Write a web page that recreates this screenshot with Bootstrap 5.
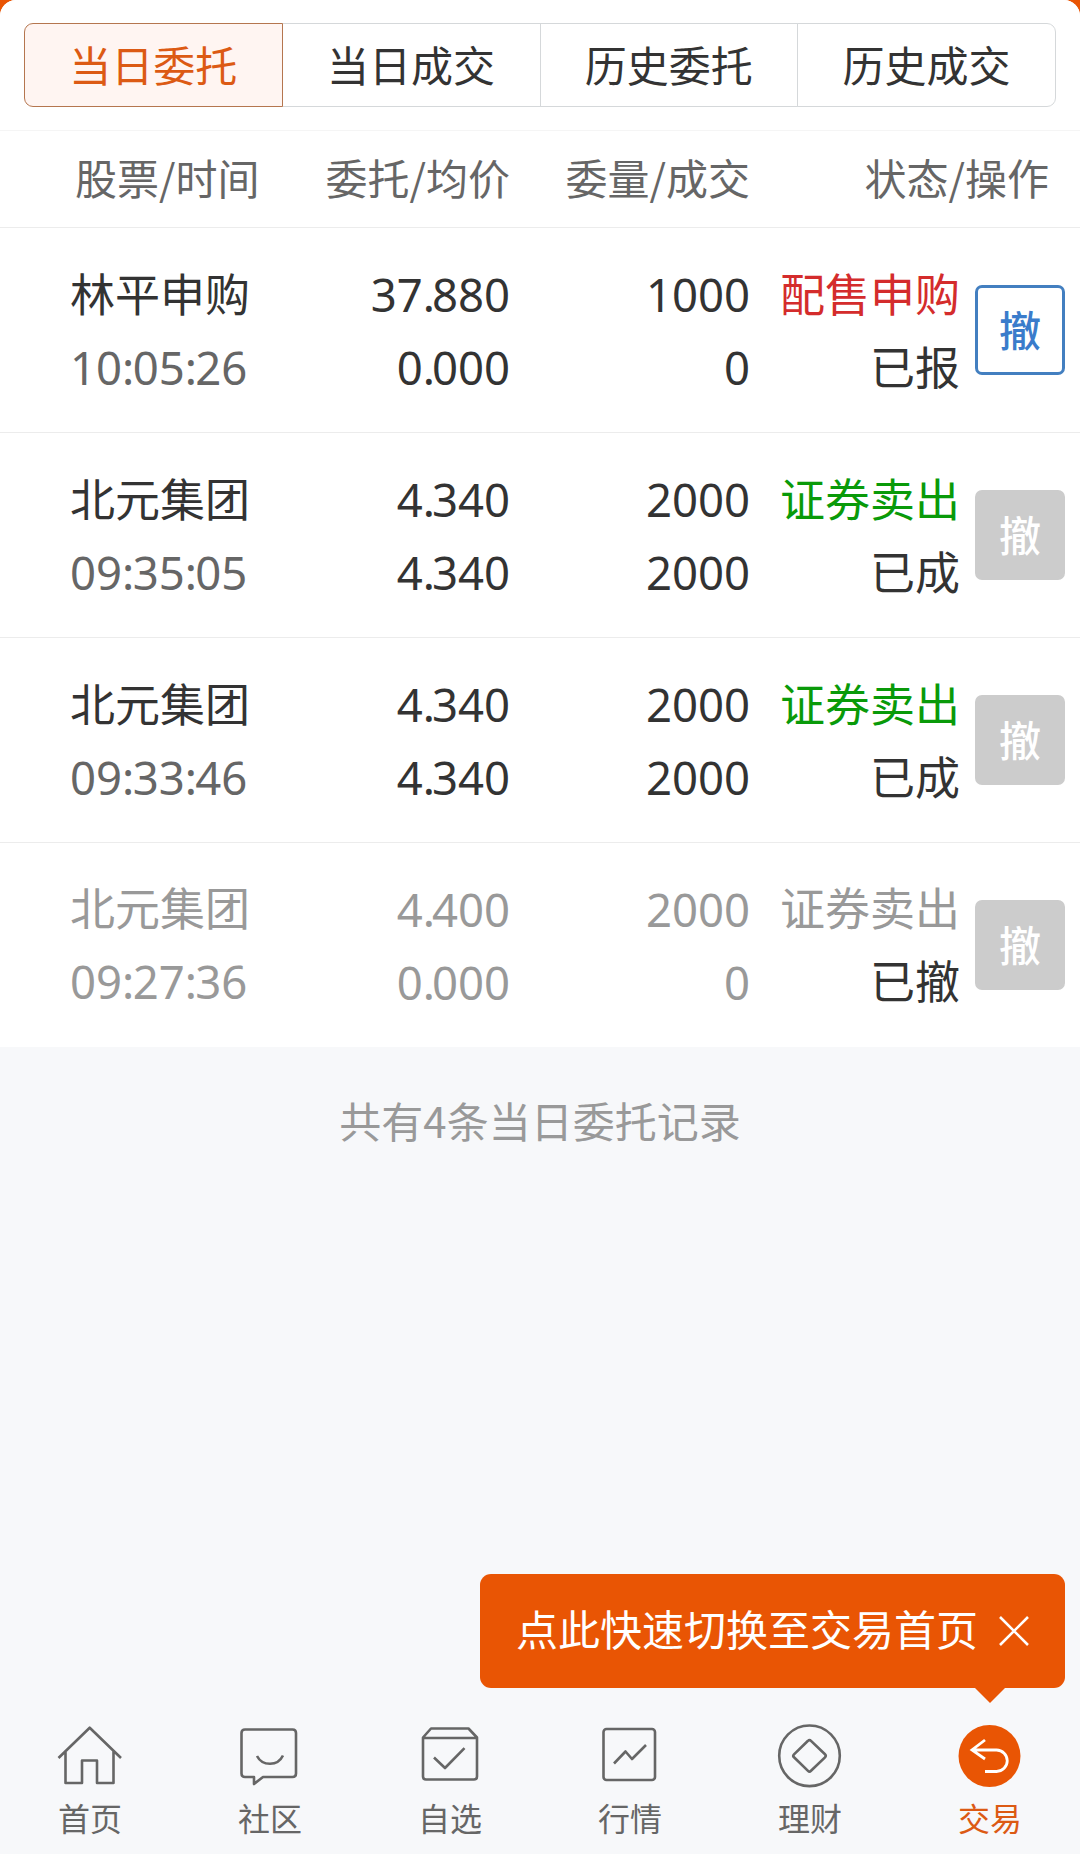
<!DOCTYPE html>
<html lang="zh-CN">
<head>
<meta charset="utf-8">
<meta name="viewport" content="width=device-width, initial-scale=1">
<title>当日委托</title>
<link href="https://cdn.jsdelivr.net/npm/bootstrap@5.3.0/dist/css/bootstrap.min.css" rel="stylesheet">
<style>
  body { background: #e95504; font-family: "Noto Sans CJK SC", sans-serif; color: #333; }
  .screen { height: 1854px; background: #f7f8fa; border-radius: 16px 16px 0 0; overflow: hidden; }
  .top-tabs { height: 131px; padding: 23px 24px 0; border-bottom: 1px solid #f5f5f5; }
  .top-tabs .btn-group { height: 84px; }
  .top-tabs .btn { flex: 1 1 0; padding: 0 0 3px; font-size: 42px; line-height: 79px; color: #333; border: 1px solid #d5d8da; border-radius: 9px; background: #fff; }
  .top-tabs .btn.active { color: #dc5a14; background: #fff5f2; border-color: #b5764f; }
  .c1 { width: 270px; padding-left: 70px; }
  .c2, .c3 { width: 240px; text-align: right; }
  .c4 { width: 210px; text-align: right; }
  .heads { height: 97px; font-size: 42px; line-height: 91px; color: #666; border-bottom: 1px solid #ececec; }
  .heads .c1 { padding-left: 75px; }
  .heads .c4 { width: 299px; }
  .order { height: 205px; font-size: 45px; line-height: 73px; border-bottom: 1px solid #ececec; }
  .order .c1, .order .c4 { margin-bottom: 3px; }
  .order:last-child { height: 204px; padding-bottom: 1px; border-bottom: 0; }
  .num { font-family: "Noto Sans", "Noto Sans CJK SC", sans-serif; font-size: 45.5px; }
  .order .c2, .order .c3 { margin-top: 2px; }
  .pt { letter-spacing: -3px; }
  .cl { letter-spacing: -1.6px; }
  .dim { color: #999; }
  .time { color: #666; line-height: 77px; margin-bottom: -4px; }
  .dim .time { color: #999; }
  .buy { color: #d42c2c; }
  .sell { color: #099a09; }
  .cancel { width: 90px; height: 90px; margin-left: 15px; padding: 0 0 2px; font-size: 42px; font-weight: 500; line-height: 78px; border: 3px solid #437fc0; border-radius: 7px; color: #3a7ccb; background: #fff; }
  .cancel:disabled { background: #ccc; border-color: #ccc; color: #fff; opacity: 1; }
  .total { padding-top: 42px; font-size: 42px; line-height: 62px; color: #999; }
  .tip { width: 585px; height: 114px; margin-right: 15px; padding: 0 36px 0 36px; border-radius: 11px; background: #e95504; color: #fff; font-size: 42px; }
  .tip-text { padding-bottom: 7px; }
  .tip::after { content: ""; position: absolute; right: 60px; top: 100%; border: 15px solid transparent; border-top-color: #e95504; border-bottom: 0; }
  .bottom-nav { height: 166px; padding-top: 31px; font-size: 32px; color: #666; }
  .bottom-nav .nav-link { color: inherit; padding: 0; line-height: 52px; }
  .bottom-nav .nav-link.active { color: #dc5a14; }
  .bottom-nav svg { display: block; width: 72px; height: 72px; margin: 0 auto; fill: none; stroke: #666; stroke-width: 2.6; stroke-linejoin: round; }
</style>
</head>
<body>
<div class="screen d-flex flex-column">
  <header class="top-tabs bg-white">
    <div class="btn-group d-flex" role="group">
      <button type="button" class="btn active">当日委托</button>
      <button type="button" class="btn">当日成交</button>
      <button type="button" class="btn">历史委托</button>
      <button type="button" class="btn">历史成交</button>
    </div>
  </header>
  <div class="heads d-flex bg-white">
    <div class="c1">股票/时间</div><div class="c2">委托/均价</div><div class="c3">委量/成交</div><div class="c4">状态/操作</div>
  </div>
  <main>
    <section class="order d-flex align-items-center bg-white">
      <div class="c1"><div>林平申购</div><div class="num time">10<span class="cl">:</span>05<span class="cl">:</span>26</div></div>
      <div class="c2 num"><div>37<span class="pt">.</span>880</div><div>0<span class="pt">.</span>000</div></div>
      <div class="c3 num"><div>1000</div><div>0</div></div>
      <div class="c4"><div class="buy">配售申购</div><div>已报</div></div>
      <button type="button" class="btn cancel">撤</button>
    </section>
    <section class="order d-flex align-items-center bg-white">
      <div class="c1"><div>北元集团</div><div class="num time">09<span class="cl">:</span>35<span class="cl">:</span>05</div></div>
      <div class="c2 num"><div>4<span class="pt">.</span>340</div><div>4<span class="pt">.</span>340</div></div>
      <div class="c3 num"><div>2000</div><div>2000</div></div>
      <div class="c4"><div class="sell">证券卖出</div><div>已成</div></div>
      <button type="button" class="btn cancel" disabled>撤</button>
    </section>
    <section class="order d-flex align-items-center bg-white">
      <div class="c1"><div>北元集团</div><div class="num time">09<span class="cl">:</span>33<span class="cl">:</span>46</div></div>
      <div class="c2 num"><div>4<span class="pt">.</span>340</div><div>4<span class="pt">.</span>340</div></div>
      <div class="c3 num"><div>2000</div><div>2000</div></div>
      <div class="c4"><div class="sell">证券卖出</div><div>已成</div></div>
      <button type="button" class="btn cancel" disabled>撤</button>
    </section>
    <section class="order d-flex align-items-center bg-white">
      <div class="c1 dim"><div>北元集团</div><div class="num time">09<span class="cl">:</span>27<span class="cl">:</span>36</div></div>
      <div class="c2 num dim"><div>4<span class="pt">.</span>400</div><div>0<span class="pt">.</span>000</div></div>
      <div class="c3 num dim"><div>2000</div><div>0</div></div>
      <div class="c4"><div class="dim">证券卖出</div><div>已撤</div></div>
      <button type="button" class="btn cancel" disabled>撤</button>
    </section>
  </main>
  <div class="total text-center">共有4条当日委托记录</div>
  <div class="tip position-relative mt-auto ms-auto d-flex align-items-center justify-content-between">
    <span class="tip-text">点此快速切换至交易首页</span>
    <svg width="30" height="30" viewBox="0 0 30 30" stroke="#fff" stroke-width="2.6"><path d="M1 1l28 28M29 1L1 29"/></svg>
  </div>
  <nav class="bottom-nav nav nav-justified flex-nowrap">
    <a class="nav-item nav-link" href="#"><svg viewBox="0 0 72 72"><path d="M4.500 39L35.700 8.700 67 39M11.500 32V64H28V41.500H43V64H59.500V32"/></svg>首页</a>
    <a class="nav-item nav-link" href="#"><svg viewBox="0 0 72 72"><path d="M11 10.500H58.500Q62 10.500 62 14V54.500Q62 58 58.500 58H29L20 65V58H11Q7.500 58 7.500 54.500V14Q7.500 10.500 11 10.500ZM23 37Q27 44.800 36 44.800T49 36.500"/></svg>社区</a>
    <a class="nav-item nav-link" href="#"><svg viewBox="0 0 72 72"><path d="M9 18.500L17 9.500H54.500L63 18.500V57.500Q63 60.500 60 60.500H12Q9 60.500 9 57.500ZM9 19H63M20 38.500L31 49 50.500 29.200"/></svg>自选</a>
    <a class="nav-item nav-link" href="#"><svg viewBox="0 0 72 72"><rect x="9.500" y="10" width="51.500" height="51" rx="3"/><path d="M20 44.500L31.500 32.500 38 40 52 26"/></svg>行情</a>
    <a class="nav-item nav-link" href="#"><svg viewBox="0 0 72 72"><circle cx="35.500" cy="36.800" r="30.300"/><path d="M34 21.800Q35.500 20.300 37 21.800L51 35.300Q52.500 36.800 51 38.300L37 51.800Q35.500 53.300 34 51.800L20 38.300Q18.500 36.800 20 35.300Z"/></svg>理财</a>
    <a class="nav-item nav-link active" href="#"><svg viewBox="0 0 72 72"><circle cx="35.500" cy="37" r="31" fill="#e95504" stroke="none"/><path d="M31 21L18 31 31 40M18 31H42.500A10.700 10.700 0 0 1 42.500 52.500H31" stroke="#fff" stroke-width="2.800" stroke-linejoin="miter"/></svg>交易</a>
  </nav>
</div>
<script src="https://cdn.jsdelivr.net/npm/bootstrap@5.3.0/dist/js/bootstrap.bundle.min.js"></script>
</body>
</html>
